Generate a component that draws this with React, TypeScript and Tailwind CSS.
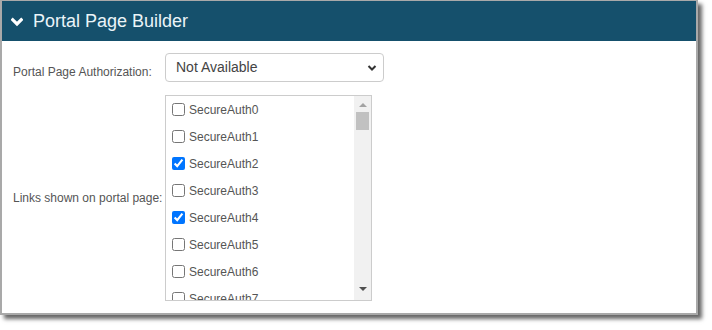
import React from "react";

const links = [
  { name: "SecureAuth0", checked: false },
  { name: "SecureAuth1", checked: false },
  { name: "SecureAuth2", checked: true },
  { name: "SecureAuth3", checked: false },
  { name: "SecureAuth4", checked: true },
  { name: "SecureAuth5", checked: false },
  { name: "SecureAuth6", checked: false },
  { name: "SecureAuth7", checked: false },
];

const App: React.FC = () => {
  return (
    <div className="w-[712px] h-[330px] bg-white font-['Liberation_Sans',Arial,sans-serif]">
      <div className="flex flex-col w-[698px] h-[315px] border-t border-l-2 border-r-2 border-b-2 border-[#a9a9a9] shadow-[4px_4px_4px_rgba(0,0,0,0.6)] bg-white">
        {/* Header */}
        <div className="flex items-center h-[40px] bg-[#15506c] pl-[9px] gap-[10px]">
          <svg width="12" height="10" viewBox="0 0 12 10" className="mt-[1px]">
            <polyline points="1.8,2.8 6,7 10.2,2.8" fill="none" stroke="#ffffff" strokeWidth="3.2" strokeLinecap="square" />
          </svg>
          <span className="text-[18px] text-[#eaf4f8] leading-none">Portal Page Builder</span>
        </div>

        {/* Body */}
        <div className="flex flex-col pl-[11px] pt-[12px] gap-[13px]">
          <div className="flex items-start">
            <label className="w-[152px] pt-[11px] text-[12px] leading-[16px] text-[#555]">Portal Page Authorization:</label>
            <div className="flex items-center justify-between w-[219px] h-[29px] border border-[#cccccc] rounded-[4px] pl-[10px] pr-[6px]">
              <span className="text-[14px] text-[#444]">Not Available</span>
              <svg width="10" height="8" viewBox="0 0 10 8">
                <polyline points="1.5,2 5,5.5 8.5,2" fill="none" stroke="#333" strokeWidth="2" />
              </svg>
            </div>
          </div>

          <div className="flex items-center">
            <label className="w-[152px] text-[12px] leading-[16px] text-[#555]">Links shown on portal page:</label>
            <div className="flex w-[207px] h-[206px] border border-[#cccccc] overflow-hidden">
              <div className="flex flex-col flex-1 pl-[6px] overflow-hidden">
                {links.map((l) => (
                  <div key={l.name} className="flex items-center h-[27px] shrink-0 gap-[4px]">
                    <input type="checkbox" defaultChecked={l.checked} className="m-0 w-[13px] h-[13px] accent-[#0075ff]" />
                    <span className="text-[12px] text-[#555]">{l.name}</span>
                  </div>
                ))}
              </div>
              <div className="flex flex-col items-center w-[17px] bg-[#f1f1f1]">
                <div className="h-[16px] flex items-center justify-center">
                  <svg width="8" height="5" viewBox="0 0 8 5">
                    <polygon points="0,5 4,1 8,5" fill="#a3a3a3" />
                  </svg>
                </div>
                <div className="w-[13px] h-[18px] bg-[#c1c1c1]" />
                <div className="flex-1" />
                <div className="h-[16px] flex items-start justify-center pt-[3px]">
                  <svg width="8" height="5" viewBox="0 0 8 5">
                    <polygon points="0,0 8,0 4,4" fill="#505050" />
                  </svg>
                </div>
              </div>
            </div>
          </div>
        </div>
      </div>
    </div>
  );
};

export default App;
